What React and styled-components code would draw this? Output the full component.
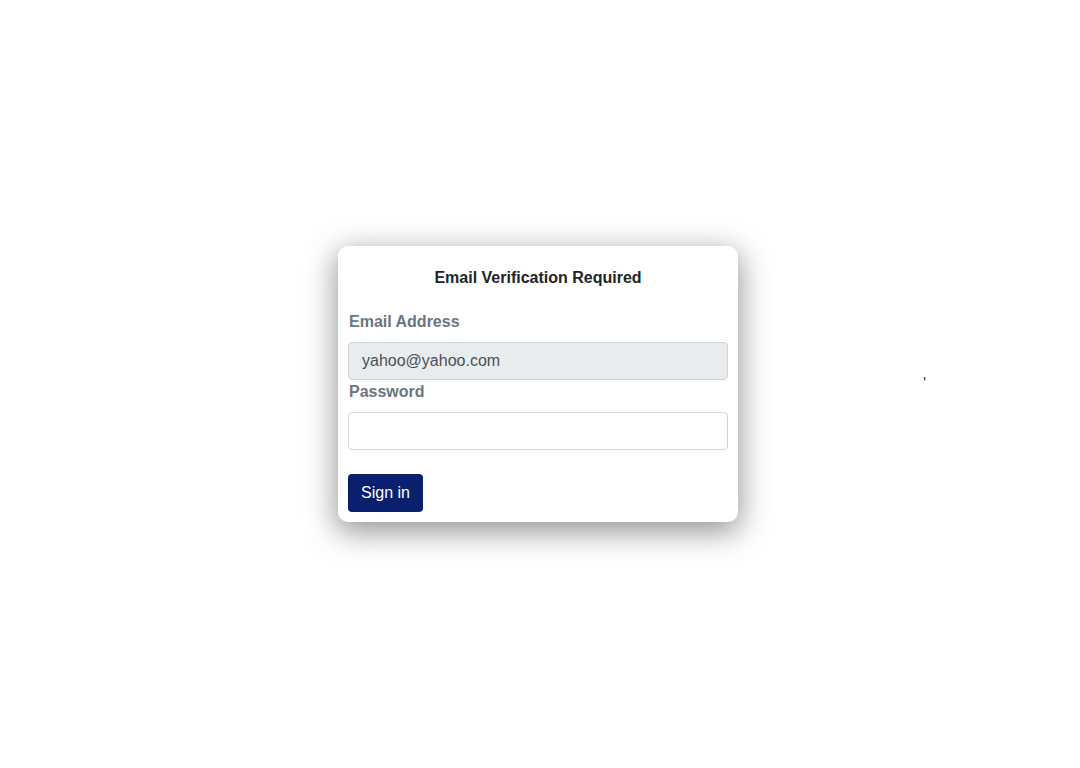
import React from 'react'
import styled, {createGlobalStyle} from 'styled-components'

const Global = createGlobalStyle`
  body {
    margin: 0;
    font-family: 'Liberation Sans', Arial, sans-serif;
    background: #ffffff;
    color: #212529;
  }
`

const Page = styled.div`
  position: relative;
  min-height: 100vh;
  display: flex;
  align-items: center;
  justify-content: center;
  padding-right: 4px;
  box-sizing: border-box;
`

const Card = styled.form`
  width: 400px;
  box-sizing: border-box;
  padding: 10px 10px 10px;
  background: #fff;
  border-radius: 10px;
  box-shadow: 0 8px 30px 2px rgba(0, 0, 0, 0.42);
`

const Title = styled.h1`
  margin: 10px 0 20px;
  font-size: 16px;
  line-height: 24px;
  font-weight: 700;
  text-align: center;
  color: #212529;
`

const Label = styled.label`
  display: block;
  margin-bottom: 8px;
  padding-left: 1px;
  font-size: 16px;
  line-height: 24px;
  font-weight: 700;
  color: #6c757d;
`

const Input = styled.input`
  display: block;
  width: 100%;
  height: 38px;
  box-sizing: border-box;
  padding: 6px 13px;
  font-family: inherit;
  font-size: 16px;
  color: #495057;
  background: ${p => (p.disabled ? '#e9ecef' : '#fff')};
  border: 1px solid #ced4da;
  border-radius: 4px;
  outline: none;
`

const Button = styled.button`
  margin-top: 24px;
  height: 38px;
  padding: 0 13px;
  font-family: inherit;
  font-size: 16px;
  color: #fff;
  background: #08206e;
  border: none;
  border-radius: 4px;
  cursor: pointer;
`

const Stray = styled.span`
  position: absolute;
  left: 923px;
  top: 372px;
  font-size: 16px;
  line-height: 24px;
  color: #444;
`

export default function App() {
  return (
    <Page>
      <Global />
      <Card onSubmit={e => e.preventDefault()}>
        <Title>Email Verification Required</Title>
        <Label htmlFor="email">Email Address</Label>
        <Input id="email" type="email" value="yahoo@yahoo.com" disabled readOnly />
        <Label htmlFor="password">Password</Label>
        <Input id="password" type="password" />
        <Button type="submit">Sign in</Button>
      </Card>
      <Stray>'</Stray>
    </Page>
  )
}
